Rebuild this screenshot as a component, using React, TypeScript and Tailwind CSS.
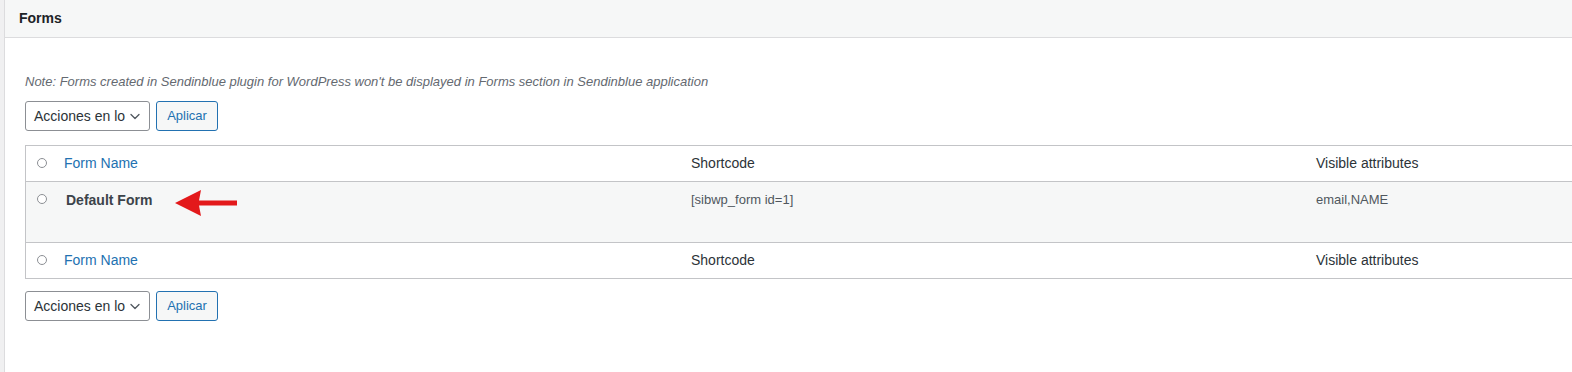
import React from "react";

const font = { fontFamily: '"Liberation Sans", Arial, sans-serif' };

function Circle() {
    return <span className="block h-[10px] w-[10px] rounded-full border border-[#8c8f94] bg-white" />;
}

function BulkActions() {
    return (
        <div className="flex items-center gap-[6px]">
            <div className="flex h-[30px] w-[125px] items-center justify-between rounded-[3px] border border-[#8c8f94] bg-white pl-[8px] pr-[8px] text-[14px] text-[#2c3338]">
                <span>Acciones en lo</span>
                <svg className="h-[12px] w-[12px]" viewBox="0 0 12 12" fill="none" stroke="#50575e" strokeWidth={1.3}>
                    <path d="M2 4.5l4 4 4-4" strokeLinecap="round" strokeLinejoin="round" />
                </svg>
            </div>
            <button className="h-[30px] w-[62px] rounded-[3px] border border-[#2271b1] bg-[#f6f7f7] text-[13px] text-[#2271b1]">
                Aplicar
            </button>
        </div>
    );
}

function HeadRow({ top }: { top?: boolean }) {
    return (
        <div className={`grid grid-cols-[28px_627px_625px_1fr] ${top ? "border-b" : "border-t"} border-[#c3c4c7] h-[36px] items-start pt-[7px] text-[14px] leading-5`}>
            <div className="pl-[11px] pt-[5px]">
                <Circle />
            </div>
            <div className="pl-[10px] text-[#2271b1]">Form Name</div>
            <div className="pl-[10px] text-[#2c3338]">Shortcode</div>
            <div className="pl-[10px] text-[#2c3338]">Visible attributes</div>
        </div>
    );
}

export default function App() {
    return (
        <div className="flex h-[372px] w-[1572px] overflow-hidden bg-[#f0f0f1]" style={font}>
            <div className="w-[4px] shrink-0" />
            <div className="flex-1 border-l border-[#dcdcde] bg-white">
                <div className="flex h-[38px] items-center border-b border-[#dcdcde] bg-[#f6f7f7] pl-[14px] text-[14px] font-bold text-[#1d2327]">
                    Forms
                </div>
                <div className="pl-[20px] pt-[35px]">
                    <p className="text-[13px] italic leading-[18px] text-[#646970]">
                        Note: Forms created in Sendinblue plugin for WordPress won't be displayed in Forms section in Sendinblue application
                    </p>
                    <div className="mt-[10px]">
                        <BulkActions />
                    </div>
                    <div className="mt-[14px] w-[1620px] border-y border-l border-[#c3c4c7]">
                        <HeadRow top />
                        <div className="relative grid h-[60px] grid-cols-[28px_627px_625px_1fr] items-start bg-[#f6f7f7] pt-[8px] text-[13px] leading-5 text-[#50575e]">
                            <div className="pl-[11px] pt-[4px]">
                                <Circle />
                            </div>
                            <div className="relative pl-[12px]">
                                <strong className="text-[14px] text-[#3c434a]">Default Form</strong>
                                <svg className="absolute left-[120px] top-[-1px]" width="64" height="28" viewBox="0 0 64 28">
                                    <polygon points="1,14 27,1 25,11.5 63,11.5 63,16.5 25,16.5 27,27" fill="#e3191b" />
                                </svg>
                            </div>
                            <div className="pl-[10px]">[sibwp_form id=1]</div>
                            <div className="pl-[10px]">email,NAME</div>
                        </div>
                        <HeadRow />
                    </div>
                    <div className="mt-[12px]">
                        <BulkActions />
                    </div>
                </div>
            </div>
        </div>
    );
}
